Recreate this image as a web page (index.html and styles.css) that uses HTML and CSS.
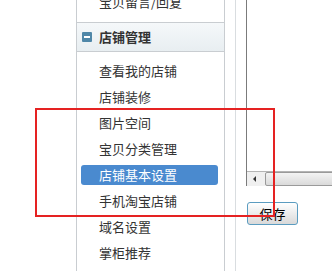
FILE: index.html
```html
<!DOCTYPE html>
<html lang="zh-CN">
<head>
    <meta charset="UTF-8">
    <title>店铺管理</title>
    <link rel="stylesheet" href="styles.css">
</head>
<body>
    <div class="page">
        <div class="spacer"></div>
        <div class="sidebar">
            <div class="prev-item">宝贝留言/回复</div>
            <div class="group-title">
                <span class="toggle"></span>店铺管理
            </div>
            <ul class="menu">
                <li>查看我的店铺</li>
                <li>店铺装修</li>
                <li>图片空间</li>
                <li>宝贝分类管理</li>
                <li class="active">店铺基本设置</li>
                <li>手机淘宝店铺</li>
                <li>域名设置</li>
                <li>掌柜推荐</li>
            </ul>
        </div>
        <div class="gutter"></div>
        <div class="main">
            <div class="panel">
                <div class="panel-body"></div>
                <div class="hscroll">
                    <span class="arrow"></span>
                    <span class="thumb"></span>
                </div>
            </div>
            <button class="save-btn">保存</button>
        </div>
    </div>
    <div class="highlight"></div>
</body>
</html>
```

FILE: styles.css
```css
body {
    margin: 0;
    font-family: "Noto Sans CJK SC", "Liberation Sans", sans-serif;
    background-color: #ffffff;
    color: #333;
    overflow: hidden;
}
.page {
    display: flex;
    height: 271px;
    overflow: hidden;
}
.spacer {
    width: 76px;
    flex-shrink: 0;
}
.sidebar {
    width: 147px;
    flex-shrink: 0;
    border-left: 1px solid #c9cdd1;
    border-right: 1px solid #c9cdd1;
    font-size: 13px;
}
/* item of the group above, scrolled half out of view */
.prev-item {
    box-sizing: border-box;
    height: 24px;
    margin-top: -1px;
    padding-left: 22px;
    line-height: 6px;
    border-bottom: 1px solid #c9cdd1;
    overflow: hidden;
}
.group-title {
    height: 28px;
    line-height: 28px;
    border-bottom: 1px solid #c9cdd1;
    background: linear-gradient(#f5f8fa, #e8eef1);
    font-weight: bold;
    font-size: 13px;
    color: #333;
    display: flex;
    align-items: center;
}
.toggle {
    width: 10px;
    height: 10px;
    margin-left: 5px;
    margin-right: 7px;
    background-color: #4f87a8;
    border-radius: 1px;
    position: relative;
}
.toggle::after {
    content: "";
    position: absolute;
    left: 2px;
    top: 4px;
    width: 6px;
    height: 2px;
    background-color: #ffffff;
}
.menu {
    list-style: none;
    margin: 0;
    padding: 9px 0 0 0;
}
.menu li {
    height: 20px;
    line-height: 20px;
    margin: 0 6px 6px 4px;
    padding-left: 18px;
    border-radius: 3px;
    white-space: nowrap;
}
.menu li.active {
    background-color: #4a8acf;
    color: #ffffff;
}
.gutter {
    width: 10px;
    flex-shrink: 0;
    border-right: 1px solid #d9dde0;
}
.main {
    margin-left: 10px;
    flex-grow: 1;
}
.panel {
    border-left: 1px solid #7b7b7b;
    width: 200px;
}
.panel-body {
    height: 171px;
}
.hscroll {
    height: 15px;
    background-color: #f0f0f0;
    border-top: 1px solid #b5b5b5;
    display: flex;
    align-items: center;
    box-sizing: border-box;
}
.arrow {
    width: 0;
    height: 0;
    margin-left: 6px;
    margin-right: 9px;
    border-top: 3px solid transparent;
    border-bottom: 3px solid transparent;
    border-right: 3px solid #333;
}
.thumb {
    flex-grow: 1;
    height: 12px;
    border: 1px solid #9a9a9a;
    border-radius: 2px;
    background: linear-gradient(#f4f4f4, #dadada);
}
.save-btn {
    margin-top: 16px;
    margin-left: 1px;
    width: 51px;
    height: 23px;
    border: 1px solid #5b9cc0;
    border-radius: 3px;
    background: linear-gradient(#ffffff, #d9d9d9);
    font-family: "Noto Sans CJK SC", sans-serif;
    font-size: 13px;
    color: #000;
    padding: 0;
}
.highlight {
    position: absolute;
    left: 35px;
    top: 108px;
    width: 236px;
    height: 105px;
    border: 2px solid #e52222;
}
```
